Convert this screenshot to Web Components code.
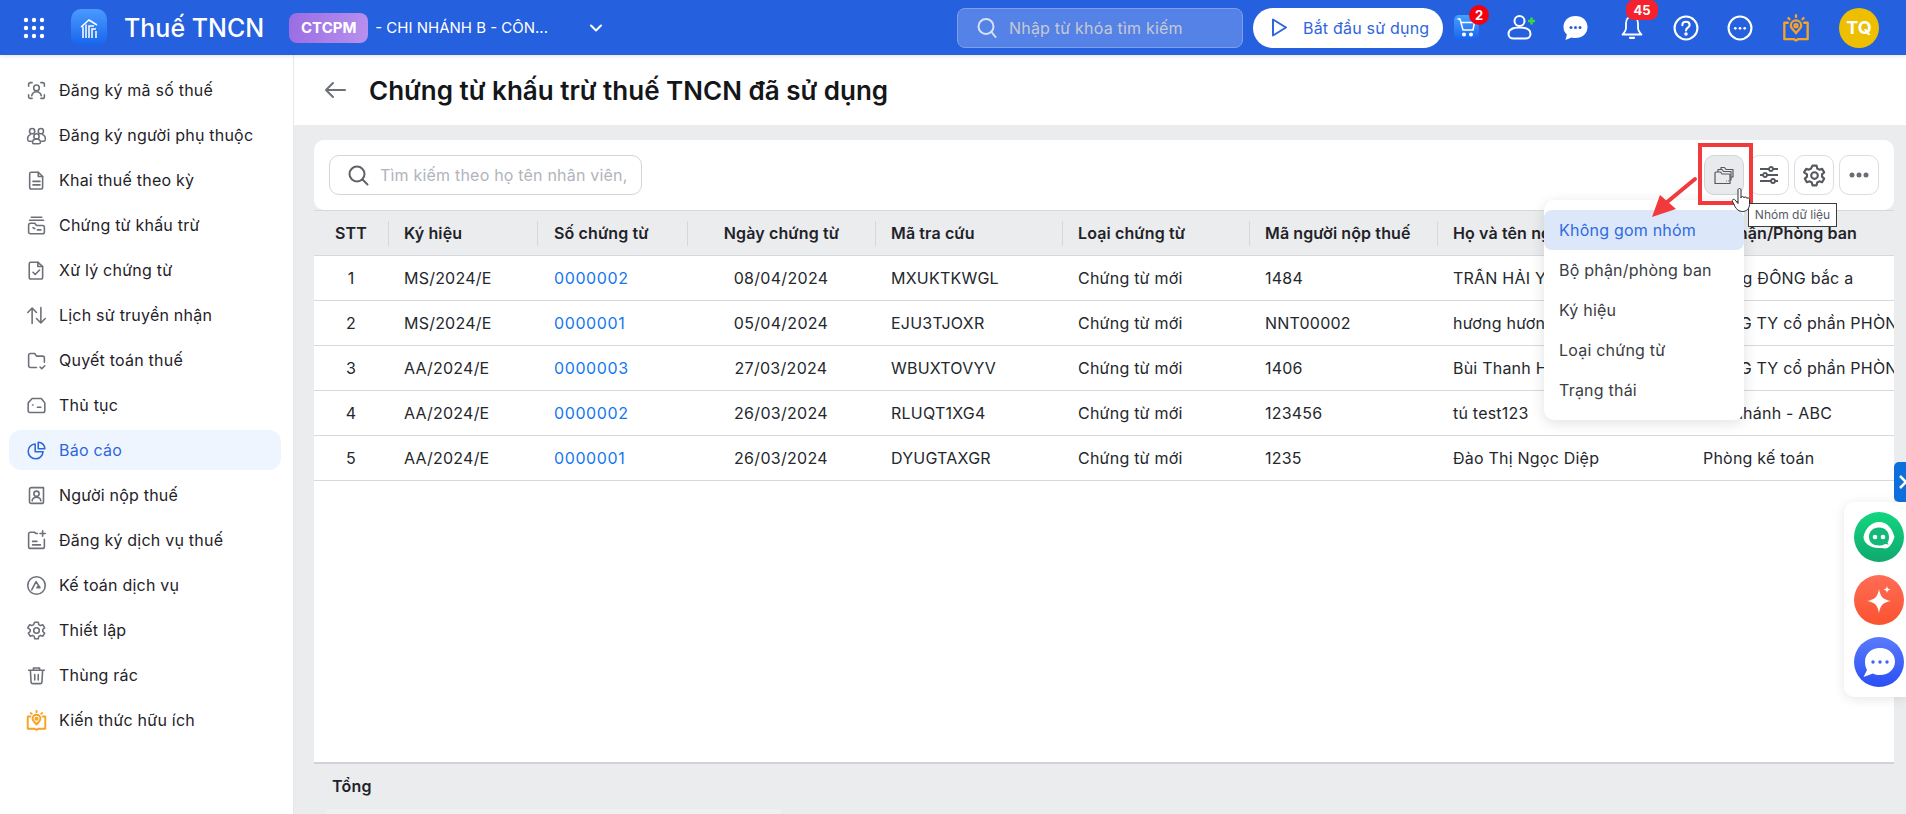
<!DOCTYPE html>
<html lang="vi">
<head>
<meta charset="utf-8">
<title>Chứng từ khấu trừ thuế TNCN đã sử dụng</title>
<style>
  html, body { margin: 0; height: 100%; overflow: hidden; }
  body { font-family: Inter, "Noto Sans", sans-serif; color: #1f2329; background: #ebecee; }
</style>
</head>
<body>
<tax-app></tax-app>

<script>
const svg = (size, body, extra = "", sw = 1.8) =>
  `<svg width="${size}" height="${size}" viewBox="0 0 24 24" fill="none" stroke="currentColor" stroke-width="${sw}" stroke-linecap="round" stroke-linejoin="round" ${extra}>${body}</svg>`;

const NAV_ICONS = {
  idcard: `<path d="M7 3H5a2 2 0 0 0-2 2v2M17 3h2a2 2 0 0 1 2 2v2M7 21H5a2 2 0 0 1-2-2v-2M17 21h2a2 2 0 0 0 2-2v-2"/><circle cx="12" cy="9" r="3.2"/><path d="M6.5 18c.8-3 3-4.500 5.500-4.500s4.700 1.500 5.500 4.500"/>`,
  people: `<circle cx="7" cy="7" r="3"/><circle cx="17" cy="7" r="3"/><circle cx="12" cy="13" r="3"/><path d="M5 11c-2 .8-3.500 3-3 6 .2 1 1 1.500 2 1.500h2M19 11c2 .8 3.500 3 3 6-.2 1-1 1.500-2 1.500h-2M7.500 20c0-2.500 2-4 4.500-4s4.500 1.500 4.500 4c0 1-1 1.500-2 1.500h-5c-1 0-2-.5-2-1.500z"/>`,
  doc: `<path d="M6 2.500h8l5 5V20a1.800 1.800 0 0 1-1.800 1.800H6A1.800 1.800 0 0 1 4.200 20V4.300A1.800 1.800 0 0 1 6 2.500z"/><path d="M14 2.500v5h5M8 13h8M8 17h8"/>`,
  folderdoc: `<path d="M6 2.500h12M4 6h16M5 9.500h5l2 2.500h7a2 2 0 0 1 2 2v5.500a2 2 0 0 1-2 2H5a2 2 0 0 1-2-2v-8a2 2 0 0 1 2-2z"/><path d="M8 14.500l2 1M13 17h4"/>`,
  doccheck: `<path d="M5.500 2.500h8l5.500 5V20a1.800 1.800 0 0 1-1.800 1.800H5.500A1.800 1.800 0 0 1 3.700 20V4.300a1.800 1.800 0 0 1 1.800-1.800z"/><path d="M13.500 2.500v5H19M8 14l2.500 2.500 5-5"/>`,
  updown: `<path d="M7 21V3.500M2 8.500l5-5 5 5M17 3v17.500M12 15.500l5 5 5-5"/>`,
  foldercheck: `<path d="M12 20H5a2 2 0 0 1-2-2V6a2 2 0 0 1 2-2h5l2 3h7a2 2 0 0 1 2 2v5"/><path d="M16 19.500l2 2 3.500-3.500"/>`,
  box: `<path d="M7 4h10.500L21.500 9v9a2 2 0 0 1-2 2h-15a2 2 0 0 1-2-2V9z"/><path d="M7.500 11.500h.5M13 14h4"/>`,
  chart: `<path d="M10.500 4.500a8.500 8.500 0 1 0 9 9H10.500z"/><path d="M14 2.500a7.500 7.500 0 0 1 7.500 7.500H14z"/>`,
  person: `<path d="M6 3h9l5 0v16a2 2 0 0 1-2 2H6a2 2 0 0 1-2-2V5a2 2 0 0 1 2-2z"/><circle cx="12" cy="10" r="3"/><path d="M7 18c.5-2.500 2.500-4 5-4s4.500 1.500 5 4"/>`,
  docplus: `<path d="M13 4H11.500l-2-1.500H5a2 2 0 0 0-2 2V19a2 2 0 0 0 2 2h14a2 2 0 0 0 2-2v-8.500"/><path d="M19 1v6M16 4h6M7.500 13h5M7.500 17h9"/>`,
  service: `<circle cx="12" cy="12" r="10"/><path d="M6.500 17L11.500 7.500 16 14.500h-3.500l2-2.500"/>`,
  gear: `<circle cx="12" cy="12" r="3.200"/><path d="M10 2.500h4l.6 2.800 2 1.100 2.700-.9 2 3.500-2.100 1.900v2.200l2.100 1.900-2 3.500-2.700-.9-2 1.100-.6 2.800h-4l-.6-2.800-2-1.100-2.700.9-2-3.500 2.100-1.900v-2.200L2 9l2-3.500 2.700.9 2-1.100z"/>`,
  trash: `<path d="M3 6h18M8.500 6V3.500h7V6M5 6l.8 13.500a2 2 0 0 0 2 1.800h8.400a2 2 0 0 0 2-1.800L19 6M10 11v6M14 11v6"/>`,
  bulb: `<path d="M12 1v1.500M5.500 3.500l1 1M18.500 3.500l-1 1"/><path d="M12 5.500a4.500 4.500 0 0 1 4.500 4.500c0 2.500-3 4-4.500 6.500C10.500 14 7.500 12.500 7.500 10A4.500 4.500 0 0 1 12 5.500z"/><circle cx="12" cy="10" r="1.300"/><path d="M5 7.500H2v14h8l2 1.200 2-1.200h8v-14h-3"/>`
};

const tpl = (html) => {
  const t = document.createElement("template");
  t.innerHTML = html;
  return t;
};

class Shadowed extends HTMLElement {
  constructor() {
    super();
    this.attachShadow({ mode: "open" });
    this.shadowRoot.appendChild(this.constructor.template.content.cloneNode(true));
  }
}

class NavItem extends Shadowed {
  static template = tpl(`
    <style>
      :host { display: flex; align-items: center; height: 40px; margin: 0 12px 5px 9px; padding-left: 17px; gap: 12px;
        border-radius: 12px; font-size: 16px; letter-spacing: .22px; color: #1f2329; }
      :host([active]) { background: #eef5fe; color: #2f66dc; }
      .ic { width: 21px; height: 21px; color: #6d7078; display: flex; flex: none; }
      :host([active]) .ic { color: #2f66dc; }
      :host([icon="bulb"]) .ic { color: #f7a325; }
    </style>
    <span class="ic"></span><slot></slot>`);
  connectedCallback() {
    const name = this.getAttribute("icon");
    this.shadowRoot.querySelector(".ic").innerHTML = svg(21, NAV_ICONS[name], "", name === "bulb" ? 2.2 : 1.8);
  }
}
customElements.define("nav-item", NavItem);

class SideNav extends Shadowed {
  static template = tpl(`
    <style>
      :host { display: block; background: #fff; padding-top: 15px; border-right: 1px solid #e6e7ea; box-sizing: border-box; }
    </style>
    <slot></slot>`);
}
customElements.define("side-nav", SideNav);

class IconBadge extends Shadowed {
  static template = tpl(`
    <style>
      :host { display: block; position: relative; flex: none; color: #fff; }
      .n { position: absolute; background: #f4202b; color: #fff; font-weight: 700; font-size: 13px;
        display: flex; align-items: center; justify-content: center; }
      ::slotted(svg) { display: block; }
    </style>
    <slot></slot><span class="n"></span>`);
  connectedCallback() {
    const n = this.shadowRoot.querySelector(".n");
    if (!this.hasAttribute("count")) { n.remove(); return; }
    n.textContent = this.getAttribute("count");
    n.style.cssText = this.getAttribute("badge");
  }
}
customElements.define("icon-badge", IconBadge);

class AppHeader extends Shadowed {
  static template = tpl(`
    <style>
      :host { display: flex; align-items: center; grid-column: 1 / -1; height: 55px; background: #2560de; color: #fff;
        padding: 0 27px 0 23px; box-sizing: border-box; box-shadow: 0 1px 4px rgba(0,0,0,.12); position: relative; z-index: 2; }
      .logo { width: 36px; height: 37px; margin-left: 26px; border-radius: 10px; background: linear-gradient(#4a9bff, #1763ec); display: flex; align-items: center; justify-content: center; }
      .app { font-size: 25px; font-weight: 500; margin-left: 17px; white-space: nowrap; }
      .tag { margin-left: 25px; width: 79px; height: 30px; border-radius: 8px; background: linear-gradient(100deg, #9a6ce3, #b791ee);
        font-size: 15px; font-weight: 700; display: flex; align-items: center; justify-content: center; }
      .org { margin-left: 7px; font-size: 15px; white-space: nowrap; }
      .chev { margin-left: 41px; display: flex; }
      .search { margin-left: auto; width: 286px; height: 40px; box-sizing: border-box; display: flex; align-items: center; gap: 12px; padding-left: 19px;
        background: #5582e6; border: 1px solid #7ea0ec; border-radius: 8px; font-size: 16px; letter-spacing: .2px; color: #c5c9d2; }
      .search svg { color: #d7e1f8; }
      .start { margin-left: 10px; width: 190px; height: 40px; box-sizing: border-box; border-radius: 20px; background: #fff; color: #2f66dc;
        display: flex; align-items: center; gap: 15px; padding-left: 18px; font-size: 16px; letter-spacing: .2px; white-space: nowrap; }
      .avatar { width: 40px; height: 40px; border-radius: 50%; background: #eebf00; margin-left: 29px; font-size: 18px; font-weight: 700;
        display: flex; align-items: center; justify-content: center; }
    </style>
    <svg width="22" height="22" viewBox="0 0 22 22" fill="#fff"><circle cx="3" cy="3" r="2.200"/><circle cx="11" cy="3" r="2.200"/><circle cx="19" cy="3" r="2.200"/><circle cx="3" cy="11" r="2.200"/><circle cx="11" cy="11" r="2.200"/><circle cx="19" cy="11" r="2.200"/><circle cx="3" cy="19" r="2.200"/><circle cx="11" cy="19" r="2.200"/><circle cx="19" cy="19" r="2.200"/></svg>
    <div class="logo"><svg width="22" height="22" viewBox="0 0 22 22" fill="none" stroke="#fff" stroke-width="1.500"><path d="M3 10l8-7 8 5M5 21V9.500M8 21V7.500M11 21V9l5 0M14 21v-9h4M18 21v-7"/></svg></div>
    <div class="app">Thuế TNCN</div>
    <div class="tag">CTCPM</div>
    <div class="org">- CHI NHÁNH B - CÔN...</div>
    <div class="chev"><svg width="14" height="14" viewBox="0 0 14 14" fill="none" stroke="#fff" stroke-width="2" stroke-linecap="round" stroke-linejoin="round"><path d="M2 4.500l5 5 5-5"/></svg></div>
    <div class="search">
      <svg width="20" height="22" viewBox="0 0 20 22" fill="none" stroke="currentColor" stroke-width="2" stroke-linecap="round"><circle cx="9" cy="9.500" r="7.500"/><path d="M14.500 15l4 5"/></svg>
      Nhập từ khóa tìm kiếm
    </div>
    <div class="start">
      <svg width="17" height="19" viewBox="0 0 17 19" fill="none" stroke="currentColor" stroke-width="2" stroke-linejoin="round"><path d="M2 1.500v16l13-8z"/></svg>
      Bắt đầu sử dụng
    </div>
    <icon-badge count="2" badge="width:20px;height:20px;border-radius:50%;background:#f5000f;left:15px;top:-10px" style="margin-left:11px">
      <svg width="25" height="25" viewBox="0 0 25 25" style="border-radius:5px;background:linear-gradient(#45a2ff,#1a62ee)" fill="none" stroke="#fff" stroke-width="1.500" stroke-linecap="round" stroke-linejoin="round"><path d="M4 4h2l3 11h10l1.500-7.500H7"/><circle cx="10" cy="19.500" r="1.300" fill="#fff"/><circle cx="17" cy="19.500" r="1.300" fill="#fff"/></svg>
    </icon-badge>
    <icon-badge style="margin-left:27px">
      <svg width="31" height="27" viewBox="0 0 30 27" fill="none" stroke="#fff" stroke-width="2"><circle cx="13" cy="7" r="5"/><path d="M2 20c0-4 4-6.500 11-6.500S24 16 24 20c0 3-2.500 4.500-5 4.500H7c-2.500 0-5-1.500-5-4.500z"/><path d="M25 3.500v7M21.500 7h7" stroke="#3ed63e" stroke-width="2.500"/></svg>
    </icon-badge>
    <icon-badge style="margin-left:26px">
      <svg width="25" height="24" viewBox="0 0 24 24"><path fill="#fff" d="M12 0c7 0 12 4.500 12 11s-5 11-12 11c-1.500 0-2.800-.2-4-.6L2 24l1.400-5.500C1.200 16.500 0 14 0 11 0 4.500 5 0 12 0z"/><g fill="#2560de"><circle cx="7.500" cy="11.500" r="1.500"/><circle cx="12" cy="11.500" r="1.500"/><circle cx="16.500" cy="11.500" r="1.500"/></g></svg>
    </icon-badge>
    <icon-badge count="45" badge="width:32px;height:20px;border-radius:8px;background:#f5222d;left:7px;top:-15px" style="margin-left:31px">
      <svg width="26" height="25" viewBox="0 0 25 25" fill="none" stroke="#fff" stroke-width="1.800" stroke-linecap="round" stroke-linejoin="round"><path d="M12.500 1.500c-4 0-6 3-6 7v4.500c0 2.500-1.200 4-3.500 6.500h19c-2.300-2.500-3.500-4-3.500-6.500V8.500c0-4-2-7-6-7z"/><path d="M10.500 22.800h4" stroke-width="2.200"/></svg>
    </icon-badge>
    <icon-badge style="margin-left:28px">
      <svg width="26" height="26" viewBox="0 0 25 25" fill="none" stroke="#fff" stroke-width="2" stroke-linecap="round"><circle cx="12.500" cy="12.500" r="11"/><path d="M9 9.800c0-2 1.500-3.300 3.500-3.300s3.500 1.300 3.500 3.100c0 2.600-3.500 2.600-3.500 5.200"/><circle cx="12.500" cy="18.300" r=".7" fill="#fff"/></svg>
    </icon-badge>
    <icon-badge style="margin-left:28px">
      <svg width="26" height="26" viewBox="0 0 25 25" fill="none" stroke="#fff" stroke-width="2"><circle cx="12.500" cy="12.500" r="11"/><g fill="#fff" stroke="none"><circle cx="8" cy="12.800" r="1.300"/><circle cx="12.500" cy="12.800" r="1.300"/><circle cx="17" cy="12.800" r="1.300"/></g></svg>
    </icon-badge>
    <icon-badge style="margin-left:29px;color:#f7a325">
      ${svg(28, NAV_ICONS.bulb, 'style="display:block"', 2)}
    </icon-badge>
    <div class="avatar">TQ</div>`);
}
customElements.define("app-header", AppHeader);

class ToolButton extends Shadowed {
  static template = tpl(`
    <style>
      :host { display: flex; align-items: center; justify-content: center; width: 40px; height: 40px; box-sizing: border-box;
        border: 1px solid #dcdde1; border-radius: 10px; background: #fff; color: #55585f; flex: none; }
      :host([active]) { background: #e9eaec; border-color: #d1d3d8; }
    </style>
    <slot></slot>`);
}
customElements.define("tool-button", ToolButton);

const COLS = "74px 149px 150px 188px 187px 187px 188px 250px 1fr";
const HEADS = ["STT", "Ký hiệu", "Số chứng từ", "Ngày chứng từ", "Mã tra cứu", "Loại chứng từ", "Mã người nộp thuế", "Họ và tên người nộp thuế", "Bộ phận/Phòng ban"];
const ROWS = [
  ["1", "MS/2024/E", "0000002", "08/04/2024", "MXUKTKWGL", "Chứng từ mới", "1484", "TRẦN HẢI YẾN", "Phòng ĐÔNG bắc a"],
  ["2", "MS/2024/E", "0000001", "05/04/2024", "EJU3TJOXR", "Chứng từ mới", "NNT00002", "hương hương", "CÔNG TY cổ phần PHÒNG"],
  ["3", "AA/2024/E", "0000003", "27/03/2024", "WBUXTOVYV", "Chứng từ mới", "1406", "Bùi Thanh Hà", "CÔNG TY cổ phần PHÒNG"],
  ["4", "AA/2024/E", "0000002", "26/03/2024", "RLUQT1XG4", "Chứng từ mới", "123456", "tú test123", "Chi nhánh - ABC"],
  ["5", "AA/2024/E", "0000001", "26/03/2024", "DYUGTAXGR", "Chứng từ mới", "1235", "Đào Thị Ngọc Diệp", "Phòng kế toán"]
];

class VoucherTable extends Shadowed {
  static template = tpl(`
    <style>
      :host { display: flex; flex-direction: column; flex: 1; min-height: 0; overflow: hidden; font-size: 16px; letter-spacing: .22px; }
      .row { display: grid; grid-template-columns: ${COLS}; height: 45px; align-items: center; background: #fff; border-bottom: 1px solid #d6d8dc; box-sizing: border-box; color: #24272c; }
      .head { height: 46px; background: #ebecee; border-top: 1px solid #d6d8dc; font-weight: 600; color: #1f2329; letter-spacing: .12px; }
      .cell { padding-left: 16px; white-space: nowrap; overflow: hidden; box-sizing: border-box; }
      .head .cell { height: 25px; line-height: 25px; border-left: 1px solid #d6d8dc; padding-left: 15px; }
      .head .cell:first-child { border-left: 0; }
      .cell:nth-child(3) { padding-left: 17px; }
      .head .cell:nth-child(3) { padding-left: 16px; }
      .head .cell.c { padding-left: 0; }
      .c { text-align: center; padding-left: 0; }
      .cell.date { letter-spacing: .3px; }
      .link { color: #1677f0; letter-spacing: .6px; }
      .body { flex: 1; background: #fff; }
      .total { height: 52px; flex: none; border-top: 2px solid #d1d3d8; box-sizing: border-box; background: #ebecee; display: flex; flex-direction: column; }
      .total b { font-weight: 600; padding: 12px 0 0 18px; line-height: 20px; height: 32px; }
      .track { margin: 10px 0 0 12px; width: 455px; height: 7px; background: #eff0f2; }
    </style>
    <div class="row head"></div>
    <div class="body"></div>
    <div class="total"><b>Tổng</b><div class="track"></div></div>`);
  connectedCallback() {
    const sr = this.shadowRoot;
    const centered = (i) => i === 0 || i === 3;
    sr.querySelector(".head").innerHTML = HEADS.map((h, i) => `<div class="cell ${centered(i) ? "c" : ""}">${h}</div>`).join("");
    sr.querySelector(".body").innerHTML = ROWS.map((r) =>
      `<div class="row">${r.map((v, i) => `<div class="cell ${centered(i) ? "c" : ""} ${i === 2 ? "link" : ""} ${i === 3 ? "date" : ""}">${v}</div>`).join("")}</div>`
    ).join("");
  }
}
customElements.define("voucher-table", VoucherTable);

class GroupMenu extends Shadowed {
  static template = tpl(`
    <style>
      :host { position: absolute; left: 1544px; top: 200px; width: 200px; box-sizing: border-box; padding: 10px 0; background: #fff; border-radius: 10px;
        box-shadow: 0 3px 14px rgba(0,0,0,.12); font-size: 16px; letter-spacing: .22px; color: #3a3d43; z-index: 3; }
      div { height: 40px; line-height: 40px; padding-left: 15px; }
      .on { background: #dce8fa; color: #2f6be0; border-radius: 8px; }
    </style>
    <div class="on">Không gom nhóm</div>
    <div>Bộ phận/phòng ban</div>
    <div>Ký hiệu</div>
    <div>Loại chứng từ</div>
    <div>Trạng thái</div>`);
}
customElements.define("group-menu", GroupMenu);

class FloatTools extends Shadowed {
  static template = tpl(`
    <style>
      :host { position: absolute; left: 1844px; top: 502px; width: 62px; height: 195px; background: #fff; border-radius: 10px 0 0 10px;
        box-shadow: 0 2px 12px rgba(0,0,0,.1); z-index: 3; display: flex; flex-direction: column; gap: 12.500px; padding: 10px 0 0 10px; box-sizing: border-box; }
      .tab { position: absolute; left: 50px; top: -40px; width: 12px; height: 40px; background: #0d6fdc; border-radius: 5px 0 0 5px; overflow: hidden; }
      svg { display: block; flex: none; }
    </style>
    <div class="tab"><svg width="12" height="40" viewBox="0 0 12 40" fill="none" stroke="#fff" stroke-width="2.500"><path d="M6 14l6 6-6 6"/></svg></div>
    <svg width="50" height="50" viewBox="0 0 50 50">
      <defs><linearGradient id="g1" x2="0" y2="1"><stop stop-color="#12d67f"/><stop offset="1" stop-color="#10a86e"/></linearGradient></defs>
      <circle cx="25" cy="25" r="25" fill="url(#g1)"/>
      <path fill="#fff" d="M25 10c8 0 13 6 15.500 15-1.500 5-4 9-7 11-2 1-6 0-8.500 0C16 36 9.500 31 9.500 25 11 17 17 10 25 10z"/>
      <path fill="#12b878" d="M25 15.500c6 0 10 4 10 9.500 0 2.500-.5 4-1.500 5.500l1 2-3.500-.5c-1.800 1-3.800 1.500-6 1.500-6 0-10-3.500-10-8.500 0-5.500 4-9.500 10-9.500z"/>
      <circle cx="21" cy="25" r="2.300" fill="#fff"/><circle cx="29" cy="25" r="2.300" fill="#fff"/>
    </svg>
    <svg width="50" height="50" viewBox="0 0 50 50">
      <defs><linearGradient id="g2" x2="0" y2="1"><stop stop-color="#ff6c55"/><stop offset="1" stop-color="#fa5330"/></linearGradient></defs>
      <circle cx="25" cy="25" r="25" fill="url(#g2)"/>
      <path fill="#fff" d="M25 14c1.500 8 4 10.500 12 12-8 1.500-10.500 4-12 12-1.500-8-4-10.500-12-12 8-1.500 10.500-4 12-12z"/>
      <path fill="#fff" d="M33 11c.5 2.300 1.200 3 3.500 3.500-2.300.5-3 1.200-3.500 3.500-.5-2.300-1.200-3-3.500-3.500 2.300-.5 3-1.200 3.500-3.500z"/>
    </svg>
    <svg width="50" height="50" viewBox="0 0 50 50">
      <defs><linearGradient id="g3" x2="0" y2="1"><stop stop-color="#5a7afc"/><stop offset="1" stop-color="#2a4ff5"/></linearGradient></defs>
      <circle cx="25" cy="25" r="25" fill="url(#g3)"/>
      <path fill="#fff" d="M26 11c9 0 15 6 15 13.500S35 38 26 38c-3 0-5-.5-7-1.500L9.500 40l3.500-7c-1.500-2.500-2-5.500-2-8.500C11 17 17 11 26 11z"/>
      <g fill="#3f63f8"><circle cx="19" cy="25" r="1.700"/><circle cx="26" cy="25" r="1.700"/><circle cx="33" cy="25" r="1.700"/></g>
    </svg>`);
}
customElements.define("float-tools", FloatTools);

class CallOut extends Shadowed {
  static template = tpl(`
    <style>
      :host { position: absolute; inset: 0; pointer-events: none; z-index: 4; display: block; }
      .box { position: absolute; left: 1698px; top: 143px; width: 55px; height: 62px; box-sizing: border-box; border: 4px solid #f23a3c; }
      .tip { position: absolute; left: 1748px; top: 203px; width: 89px; height: 24px; box-sizing: border-box; border: 1px solid #3c3c3c; background: #fff;
        font-size: 12px; color: #565a63; line-height: 22px; text-align: center; white-space: nowrap; }
      svg { position: absolute; left: 0; top: 0; }
    </style>
    <div class="box"></div>
    <svg width="1906" height="814">
      <path d="M1695 179L1666 203" stroke="#f23a3c" stroke-width="4" stroke-linecap="round"/>
      <path d="M1652 217L1660 195L1676 209z" fill="#f23a3c"/>
    </svg>
    <div class="tip">Nhóm dữ liệu</div>
    <svg width="1906" height="814">
      <path d="M1738 190c0-2 3-2 3 0v8c0-2 3-2 3 0 0-1.500 3-1.500 3 .5 0-1 2.500-1 2.500 1v5c0 4-3 7-7 7-3.500 0-6-2-7.500-5l-2.500-5c-1-2 1.500-3 2.500-1.500l3 3.500z" fill="#fff" stroke="#2a2c30" stroke-width="1"/>
    </svg>`);
}
customElements.define("call-out", CallOut);

class VoucherPage extends Shadowed {
  static template = tpl(`
    <style>
      :host { display: flex; flex-direction: column; min-width: 0; min-height: 0; background: #ebecee; }
      .title { height: 70px; flex: none; background: #fff; display: flex; align-items: center; padding-left: 30px; gap: 23px; }
      h1 { margin: 0; font-size: 26px; font-weight: 600; color: #14161a; white-space: nowrap; }
      .wrap { flex: 1; min-height: 0; display: flex; flex-direction: column; padding: 15px 12px 0 20px; }
      .bar { height: 70px; flex: none; background: #fff; border-radius: 10px; display: flex; align-items: center; padding: 0 15px; gap: 5px; }
      .search { width: 313px; height: 40px; box-sizing: border-box; border: 1px solid #d3d5d9; border-radius: 10px; margin-right: auto; display: flex; align-items: center;
        gap: 11px; padding: 0 9px 0 18px; white-space: nowrap; font-size: 16px; letter-spacing: .2px; color: #b1b4bb; }
      .search svg { flex: none; color: #5f6268; }
      .search span { flex: 1; min-width: 0; overflow: hidden; }
    </style>
    <div class="title">
      <svg width="22" height="18" viewBox="0 0 22 18" fill="none" stroke="#6d7078" stroke-width="2" stroke-linecap="round" stroke-linejoin="round"><path d="M21 9H2M9 2L2 9l7 7"/></svg>
      <h1>Chứng từ khấu trừ thuế TNCN đã sử dụng</h1>
    </div>
    <div class="wrap">
      <div class="bar">
        <div class="search">
          <svg width="21" height="21" viewBox="0 0 21 21" fill="none" stroke="currentColor" stroke-width="2" stroke-linecap="round"><circle cx="9" cy="9" r="7.500"/><path d="M14.500 14.500l5 5"/></svg>
          <span>Tìm kiếm theo họ tên nhân viên, mã số thuế</span>
        </div>
        <tool-button active>
          <svg width="22" height="20" viewBox="0 0 22 20" fill="none" stroke="#55585f" stroke-width="1.200" stroke-linejoin="round"><path d="M2 18.500V8a1 1 0 0 1 1-1h4.500l1.500 2h7a1 1 0 0 1 1 1v8.500z"/><path d="M5 7V4.500h4l1.500 2h7.500V15h-1M8 4.500V2.500h3.500L13 4.500h7V12h-2"/><path d="M13 16h.5M15 16h.5" stroke-width="1.500"/></svg>
        </tool-button>
        <tool-button>
          <svg width="20" height="18" viewBox="0 0 20 18" fill="none" stroke="#55585f" stroke-width="1.800"><path d="M1 3h9M14 3h5M1 9h3M8 9h11M1 15h11M16 15h3"/><circle cx="12" cy="3" r="2"/><circle cx="6" cy="9" r="2"/><circle cx="14" cy="15" r="2"/></svg>
        </tool-button>
        <tool-button>${svg(25, NAV_ICONS.gear, "", 2)}</tool-button>
        <tool-button>
          <svg width="20" height="6" viewBox="0 0 20 6" fill="#6a6d74"><circle cx="3" cy="3" r="2.500"/><circle cx="10" cy="3" r="2.500"/><circle cx="17" cy="3" r="2.500"/></svg>
        </tool-button>
      </div>
      <voucher-table></voucher-table>
    </div>`);
}
customElements.define("voucher-page", VoucherPage);

const NAV = [
  ["idcard", "Đăng ký mã số thuế"], ["people", "Đăng ký người phụ thuộc"], ["doc", "Khai thuế theo kỳ"],
  ["folderdoc", "Chứng từ khấu trừ"], ["doccheck", "Xử lý chứng từ"], ["updown", "Lịch sử truyền nhận"],
  ["foldercheck", "Quyết toán thuế"], ["box", "Thủ tục"], ["chart", "Báo cáo"], ["person", "Người nộp thuế"],
  ["docplus", "Đăng ký dịch vụ thuế"], ["service", "Kế toán dịch vụ"], ["gear", "Thiết lập"], ["trash", "Thùng rác"],
  ["bulb", "Kiến thức hữu ích"]
];

class TaxApp extends Shadowed {
  static template = tpl(`
    <style>
      :host { display: grid; grid-template-columns: 294px 1fr; grid-template-rows: 55px 1fr; height: 100vh; position: relative; overflow: hidden; }
    </style>
    <app-header></app-header>
    <side-nav></side-nav>
    <voucher-page></voucher-page>
    <group-menu></group-menu>
    <float-tools></float-tools>
    <call-out></call-out>`);
  connectedCallback() {
    const side = this.shadowRoot.querySelector("side-nav");
    side.innerHTML = NAV.map(([icon, label]) =>
      `<nav-item icon="${icon}" ${label === "Báo cáo" ? "active" : ""}>${label}</nav-item>`
    ).join("");
  }
}
customElements.define("tax-app", TaxApp);
</script>
</body>
</html>
